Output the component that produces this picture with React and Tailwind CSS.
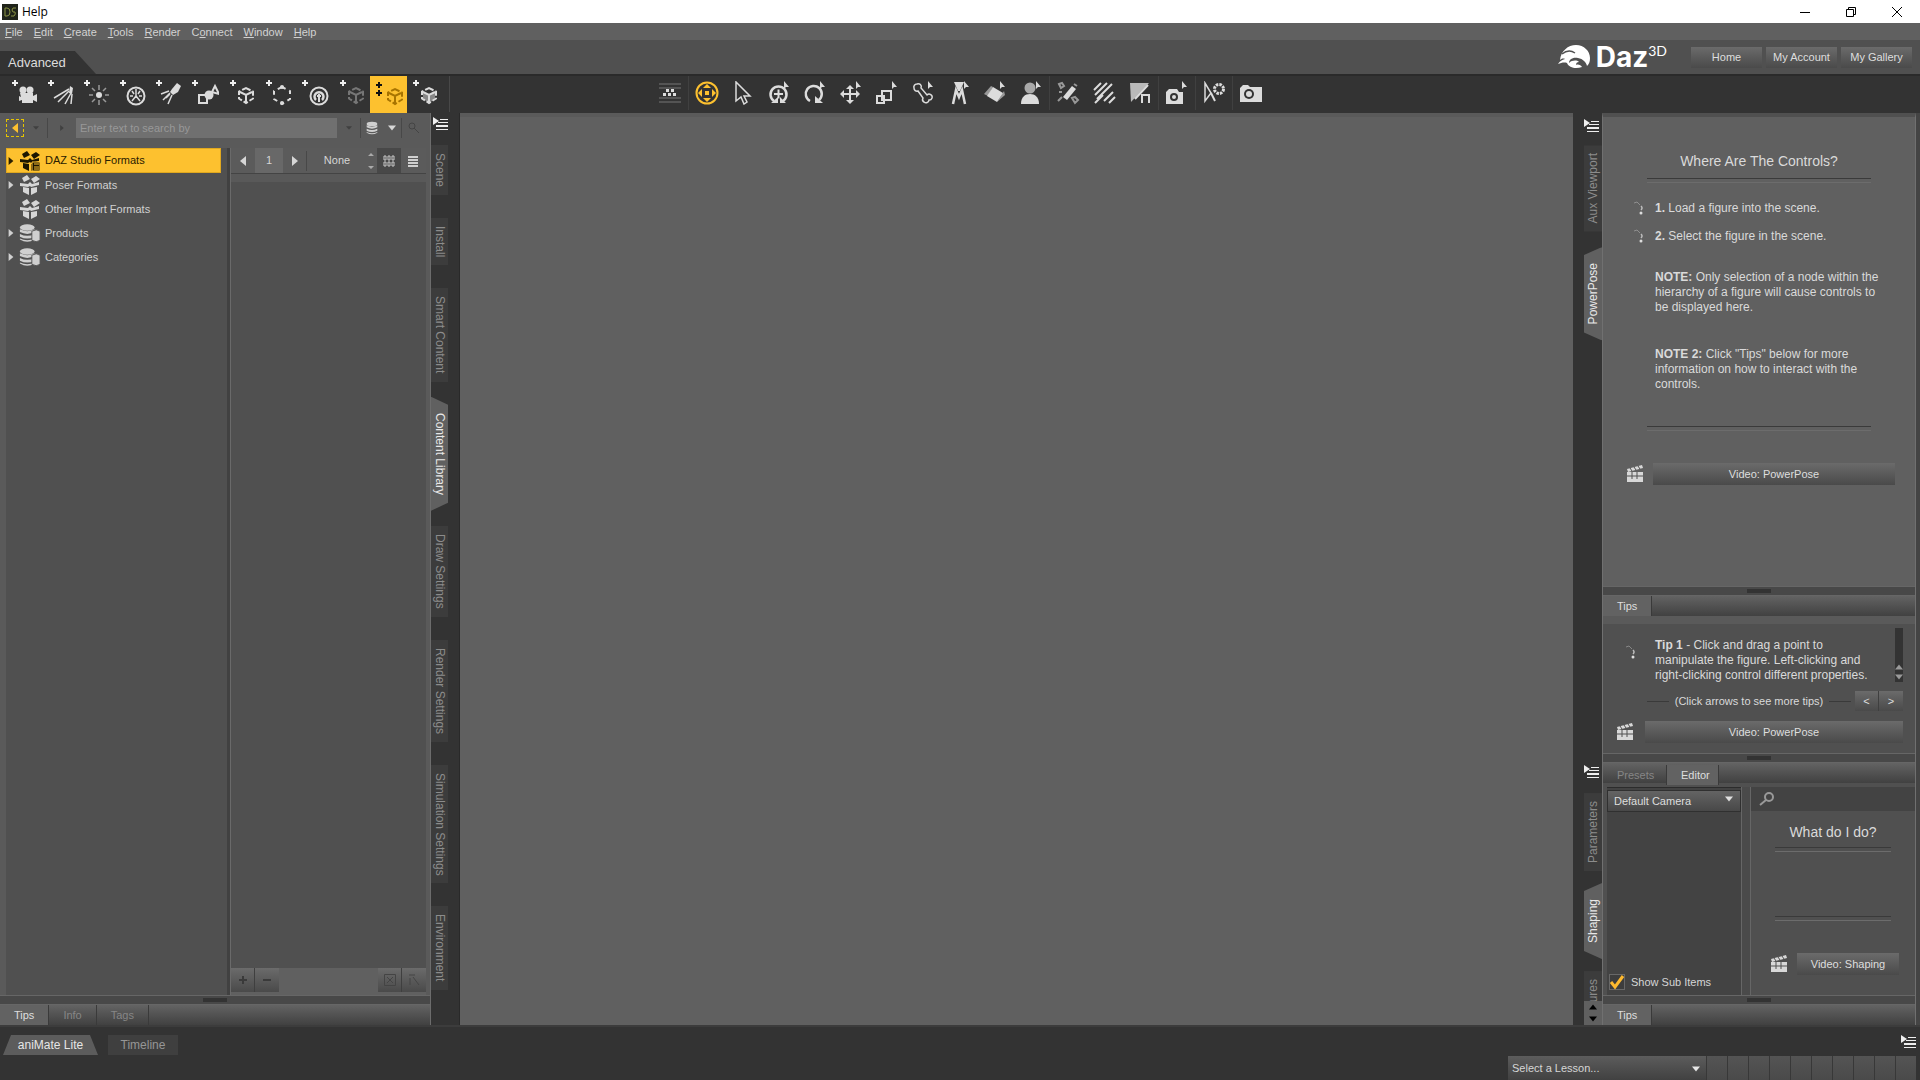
import { useState } from 'react';
import clsx from 'clsx';

// Toolbar glyphs, all drawn on a 24x24 grid
const Cube = () => (
  <g fill="none" stroke="currentColor" strokeWidth="2">
    <path d="M14 6l7 3.5v7L14 21l-7-4.500v-7z" strokeDasharray="5 2" />
    <path d="M8 10l6 3 6-3M14 13v7" />
  </g>
);

const Pointer = () => <path d="M17 0v8l2-2 3 0z" fill="currentColor" />;

const glyphs = {
  camera: <><circle cx="9" cy="8" r="3.500" /><circle cx="16" cy="8" r="3.500" /><path d="M6 11h13v3l4-2v8l-4-2v3H8v-3l-3 1v-5l2 1z" /></>,
  distant: <><path d="M20 4l3 2-1 6-3-1z" /><path d="M19 7L4 16M19 9L8 20M21 11l-6 11M22 12l-1 10" fill="none" stroke="currentColor" strokeWidth="1.500" /></>,
  point: <><circle cx="13" cy="13" r="3" /><path d="M13 3v5M13 18v5M3 13h4M19 13h4M6 6l3 3M17 17l3 3M20 6l-3 3M6 20l3-3" fill="none" stroke="currentColor" strokeWidth="1.500" opacity=".6" /></>,
  sun: <g fill="none" stroke="currentColor"><circle cx="14" cy="14" r="8.500" strokeWidth="2" /><path d="M14 7v7l-4 5M14 14l4 5M8 14h3M17 14h3M10 9l2 3M18 9l-2 3" strokeWidth="1.500" /></g>,
  spot: <><path d="M14 7l5-6 4 3-3 6-5 3-3-3z" /><path d="M11 9L3 12M12 11l-7 7M14 13l-4 9M12 12l-4 4" fill="none" stroke="currentColor" strokeWidth="1.500" /></>,
  shapes: <><circle cx="14" cy="13" r="4.500" /><path d="M4 13h8v8H4zM17 10l3-6 4 8z" fill="none" stroke="currentColor" strokeWidth="2" /></>,
  cube: <Cube />,
  dashed: <><path d="M14 5l8 4v8l-8 5-8-5V9z" fill="none" stroke="currentColor" strokeWidth="2" strokeDasharray="4 4" /><circle cx="14" cy="5" r="2" /><circle cx="14" cy="21" r="2" /></>,
  target: <g fill="none" stroke="currentColor"><circle cx="14" cy="14" r="8.500" strokeWidth="2" /><path d="M11 18a4.500 4.500 0 1 1 6 0" strokeWidth="2.500" /><path d="M14 12v8M12 14h4" strokeWidth="2" /></g>,
  faded: <g opacity=".4"><Cube /></g>,
  fill: <><Cube /><path d="M14 13l6-3v7l-6 4-6-4v-7z" opacity=".5" /></>,
};

const tools = {
  grid: <><path d="M1 3h22M1 7h22M1 17h22M1 21h22" stroke="currentColor" opacity=".4" /><path d="M8 8h3v3H8zM13 8h3v3h-3zM5 12h3v3H5zM10 12h3v3h-3zM15 12h3v3h-3z" /></>,
  orbit: <g className="text-[#fdc12f]"><circle cx="12" cy="12" r="10.500" fill="none" stroke="currentColor" strokeWidth="2" /><path fill="currentColor" d="M12 3l4 4H8zM12 21l4-4H8zM3 12l4-4v8zM21 12l-4-4v8zM10 10h4v4h-4z" /></g>,
  select: <path d="M5 1v19l5-4 3 7 3-2-3-6h6z" fill="#333" stroke="currentColor" strokeWidth="1.500" />,
  universal: <><path d="M7 20a8 8 0 1 1 9 0" fill="none" stroke="currentColor" strokeWidth="2.500" /><path d="M7 13h9M11.500 8.500v9" stroke="currentColor" strokeWidth="2" /><path d="M4 22h7v-6zM19 22h-6v-6z" /><Pointer /></>,
  rotate: <><path d="M7 20a8 8 0 1 1 9-1" fill="none" stroke="currentColor" strokeWidth="2.500" /><path d="M20 22h-8v-7z" /><Pointer /></>,
  move: <><path d="M11 4l4 4h-3v4h5V9l4 4-4 4v-3h-5v5h3l-4 4-4-4h3v-5H5v3l-4-4 4-4v3h5V8H7z" /><Pointer /></>,
  scale: <><path d="M7 10h9v9H7zM2 15h7v7H2z" fill="none" stroke="currentColor" strokeWidth="2" /><Pointer /></>,
  bone: <><path d="M3 7a3 3 0 0 1 3-4 3 3 0 0 1 4 4l6 7a3 3 0 0 1 5 3 3 3 0 0 1-3 2 3 3 0 0 1-5 2 3 3 0 0 1-1-4L7 10a3 3 0 0 1-4-3z" fill="none" stroke="currentColor" strokeWidth="1.500" /><Pointer /></>,
  joint: <><path d="M7 1h10l-4 9h-2z" /><path d="M6 23L9 9l3 7 3-7 3 14" fill="none" stroke="currentColor" strokeWidth="2.500" /><Pointer /></>,
  paint: <><path d="M10 6l10 6-6 9-10-6z" /><path d="M1 13l7-8 2 1-5 9zM14 21l8-7-1-4z" opacity=".6" /><Pointer /></>,
  figure: <><circle cx="11" cy="7" r="5.500" opacity=".7" /><path d="M2 23c0-7 4-10 9-10s9 3 9 10z" /><Pointer /></>,
  plus: <><path d="M7 16l9-11 4 3-9 11z" /><path d="M3 3l3-1 2 3-3 2zM16 17l3-1 3 3-3 3zM2 20l4-4M18 3l3 2M3 11h3" fill="none" stroke="currentColor" strokeWidth="2" opacity=".6" /></>,
  hatch: <path d="M2 9l7-7M3 14L15 2M5 18L20 3M3 22l8-8M12 20l9-9M17 22l6-6" fill="none" stroke="currentColor" strokeWidth="2" />,
  brush: <><path d="M2 2h19L3 21z" opacity=".8" /><path d="M20 4L8 18l4 0L22 7z" fill="#333" /><path d="M20 4L7 18M14 22v-8h7v8" fill="none" stroke="currentColor" strokeWidth="2" /></>,
  snap: <><path d="M1 11l3-3h8l2 3h4v12H1z" /><circle cx="9" cy="16" r="4" fill="#333" /><circle cx="9" cy="16" r="2" /><Pointer /></>,
  gear: <><path d="M3 2v18l6-8z" fill="none" stroke="currentColor" strokeWidth="1.500" /><circle cx="17" cy="8" r="4.500" fill="none" stroke="currentColor" strokeWidth="3" strokeDasharray="2.500 1" /><path d="M9 12l4 8" stroke="currentColor" strokeWidth="2" /></>,
  render: <><path d="M1 7l3-3h5l2 2h12v15H1z" /><circle cx="10" cy="13" r="5" fill="#333" /><circle cx="10" cy="13" r="3" /></>,
};

const groupEnds = ['grid', 'figure', 'brush', 'snap', 'gear'];

const Glyph = ({ children }) => (
  <svg viewBox="0 0 24 24" className="w-6 h-6" fill="currentColor">{children}</svg>
);

const MenuIcon = () => (
  <svg viewBox="0 0 15 14" className="w-[15px] h-[14px] shrink-0" fill="#eee">
    <path d="M0 0l6 4-6 4zM7 2h8v1H7zM5 5h10v1H5zM3 8h12v2H3zM3 12h12v1H3z" />
  </svg>
);

const Clapper = () => (
  <svg viewBox="0 0 20 20" className="w-5 h-5 shrink-0" fill="#d8d8d8">
    <path d="M2 8h16v10H2z" />
    <path d="M2 5l15-4 1 3L3 8z" />
    <path d="M5 4l2 3M9 3l2 3M13 2l2 3M2 12h16M7 8v7M12 8v7" stroke="#505050" fill="none" />
  </svg>
);

const Bullet = () => (
  <svg viewBox="0 0 14 16" className="w-3.5 h-4 shrink-0" fill="none" stroke="#bdbdbd">
    <path d="M3 3l3-1 3 3" opacity=".5" />
    <path d="M10 6q2 2 0 4" strokeWidth="1.500" />
    <circle cx="10" cy="13" r="1.500" fill="#ddd" stroke="none" />
  </svg>
);

const Box = ({ dark }) => (
  <svg viewBox="0 0 22 20" className="w-[22px] h-5 shrink-0" fill={dark ? '#1c1600' : '#d6d6d6'}>
    <path d="M3 3l5-3 3 4-6 3zM12 4l5-3 4 3-6 4zM1 8l8 1 2-2 2 2 7-2v3l-8 2-1-1-2 1-8-1zM4 12l6 1v7l-6-3zM12 13l6-1v5l-6 3z" />
    {dark && <path d="M13 11h8v9h-8zM15 13h5M15 16h5M15 18h5" stroke="#fdc12f" />}
  </svg>
);

const Database = ({ small }) => (
  <svg viewBox="0 0 24 20" className={small ? 'w-4 h-3.5 shrink-0' : 'w-[22px] h-5 shrink-0'} fill="#cfcfcf">
    <ellipse cx="9" cy="4" rx="8" ry="3.500" />
    <path d="M1 6q8 4 16 0v3q-8 4-16 0zM1 11q8 4 16 0v3q-8 4-16 0zM1 16q8 4 16 0v1q-8 5-16 0z" />
    {!small && <path d="M14 8q5-3 9 0v10q-4 3-9 0z" stroke="#505050" />}
  </svg>
);

const Arrow = ({ className }) => (
  <svg viewBox="0 0 10 10" className={clsx('h-2.5 shrink-0', className)} fill="currentColor">
    <path d="M0 2h10L5 8z" />
  </svg>
);

const RaisedButton = ({ className, children, ...rest }) => (
  <button
    className={clsx('bg-linear-to-b from-[#6b6b6b] to-[#4a4a4a] text-[11px] text-[#dedede] flex items-center justify-center whitespace-nowrap', className)}
    {...rest}
  >
    {children}
  </button>
);

// Vertical pane tabs. The right-hand strip reads upwards.
const SideTab = ({ label, active, flip }) => (
  <button
    className={clsx(
      'w-full flex items-center justify-center shrink-0',
      flip && 'rotate-180',
      active
        ? 'bg-[#606060] text-[#e8e8e8] py-4 -my-2 [clip-path:polygon(0_0,100%_8px,100%_calc(100%-8px),0_100%)]'
        : 'bg-[#3c3c3c] text-[#8c8c8c] py-2'
    )}
  >
    <span className="text-[12px] leading-[18px] whitespace-nowrap [writing-mode:vertical-rl]">{label}</span>
  </button>
);

const PaneTab = ({ label, active, className }) => (
  <button
    className={clsx(
      'h-full px-3.5 text-[11px] border-r border-[#3a3a3a]',
      active ? 'bg-[#626262] text-[#dedede]' : 'text-[#868686]',
      className
    )}
  >
    {label}
  </button>
);

const PaneTabBar = ({ children }) => (
  <div className="h-5 shrink-0 flex bg-linear-to-b from-[#636363] to-[#414141]">{children}</div>
);

const Splitter = () => (
  <div className="h-2.5 shrink-0 flex items-center justify-center border-y border-[#666] bg-[#484848]">
    <span className="w-6 h-1 bg-[#333]" />
  </div>
);

const Rule = ({ className }) => (
  <div className={clsx('border-t border-[#3a3a3a]', className)}>
    <div className="border-b border-[#6c6c6c] h-1" />
  </div>
);

const TitleBar = () => (
  <div className="h-[23px] shrink-0 bg-white flex items-center pl-0.5 text-black">
    <svg viewBox="0 0 16 16" className="w-4 h-4">
      <path d="M0 0h16v16H0z" fill="#20241a" />
      <path d="M3 4h2q3 0 3 4t-3 4H3zM14 4h-3q-2 2 0 4h2q1 2-1 4h-3" fill="none" stroke="#8b9444" />
    </svg>
    <span className="ml-1 text-[12px] font-['Open_Sans',sans-serif]">Help</span>
    <div className="ml-auto flex">
      <button aria-label="Minimize" className="w-[46px] h-5 flex items-center justify-center">
        <svg viewBox="0 0 10 10" className="w-2.5 h-2.5" stroke="#000"><path d="M0 5.500h10" /></svg>
      </button>
      <button aria-label="Restore" className="w-[46px] h-5 flex items-center justify-center">
        <svg viewBox="0 0 10 10" className="w-2.5 h-2.5" stroke="#000" fill="none"><path d="M.5 2.500h7v7h-7zM2.500 2.500v-2h7v7h-2" /></svg>
      </button>
      <button aria-label="Close" className="w-[46px] h-5 flex items-center justify-center">
        <svg viewBox="0 0 10 10" className="w-2.5 h-2.5" stroke="#000"><path d="M0 0l10 10M10 0L0 10" /></svg>
      </button>
    </div>
  </div>
);

const MenuBar = () => (
  <nav className="h-[17px] shrink-0 bg-[#606060] flex items-center gap-[11px] pl-[5px] pt-0.5 text-[11px] text-[#d2d2d2]">
    {['File', 'Edit', 'Create', 'Tools', 'Render', 'Connect', 'Window', 'Help'].map((item) => (
      <button key={item}>
        {item === 'Connect' ? <>C<u>o</u>nnect</> : <><u>{item[0]}</u>{item.slice(1)}</>}
      </button>
    ))}
  </nav>
);

const Brand = () => (
  <div className="h-[34px] shrink-0 bg-[#505050] flex items-end justify-between">
    <button className="w-24 h-[23px] pl-2 text-left text-[13px] text-[#dcdcdc] bg-[#333] [clip-path:polygon(0_0,78%_0,100%_100%,0_100%)]">
      Advanced
    </button>
    <div className="flex h-full items-center pr-2">
      <div className="flex h-full items-center text-white mr-6">
        <svg viewBox="0 0 32 24" className="w-8 h-6" fill="#fff">
          <path d="M0 19c2-3 4-4 7-5-2-1-4 0-5 1C3 6 10 0 18 0c8 0 14 6 14 13 0 4-1 6-3 8-1-4-4-7-9-8-6-1-9 2-9 5 3-3 8-3 10-1-2 0-3 1-3 3 2-1 5 0 6 2-6 2-13 1-15-4-3-1-6 0-9 1z" />
          <path d="M4 9c5-4 10-3 13-1" fill="none" stroke="#505050" strokeWidth="1.500" />
        </svg>
        <span className="ml-1.5 text-[28px] leading-[30px] font-bold font-['Inter',sans-serif]">Daz</span>
        <span className="self-start mt-1 text-[14px] leading-[14px] font-['Lato',sans-serif]">3D</span>
      </div>
      <div className="flex gap-1">
        {['Home', 'My Account', 'My Gallery'].map((item) => (
          <RaisedButton key={item} className="w-[71px] h-[21px]">{item}</RaisedButton>
        ))}
      </div>
    </div>
  </div>
);

const PlusMark = () => (
  <svg viewBox="0 0 6 6" className="absolute left-1.5 top-1 w-1.5 h-1.5" stroke="#eee" strokeWidth="2"><path d="M3 0v6M0 3h6" /></svg>
);

const Toolbar = () => (
  <div className="h-[39px] shrink-0 bg-[#333] border-t-2 border-[#2a2a2a] grid grid-cols-[1fr_auto_1fr] text-[#dcdcdc]">
    <div className="flex pl-1.5">
      {Object.keys(glyphs).slice(0, 10).map((name) => (
        <button
          key={name}
          aria-label={name}
          className={clsx('relative h-9 flex items-center justify-center pl-1', name === 'shapes' || name === 'target' ? 'w-[38px]' : 'w-9')}
        >
          <Glyph>{glyphs[name]}</Glyph>
          <PlusMark />
        </button>
      ))}
      <button aria-label="create active" className="relative w-[37px] h-[37px] flex items-center justify-center pl-2 bg-[#fdc12f] text-[#a87400]">
        <Glyph>{glyphs.cube}</Glyph>
        <svg viewBox="0 0 6 14" className="absolute left-1.5 top-1.5 w-1.5 h-3.5" stroke="#111" strokeWidth="2"><path d="M3 0v6M0 3h6M3 8v6M0 11h6" /></svg>
      </button>
      <button aria-label="fill" className="relative w-9 h-9 flex items-center justify-center pl-1">
        <Glyph>{glyphs.fill}</Glyph>
        <PlusMark />
      </button>
      <div className="ml-1.5 w-px h-9 bg-[#484848]" />
    </div>
    <div className="flex">
      {Object.entries(tools).map(([name, art]) => (
        <button
          key={name}
          aria-label={name}
          className={clsx('h-[34px] flex items-center justify-center', groupEnds.includes(name) ? 'w-[37px] border-r border-[#404040]' : 'w-9')}
        >
          <Glyph>{art}</Glyph>
        </button>
      ))}
    </div>
  </div>
);

const treeItems = [
  { label: 'DAZ Studio Formats', icon: <Box dark />, open: true },
  { label: 'Poser Formats', icon: <Box />, open: true },
  { label: 'Other Import Formats', icon: <Box /> },
  { label: 'Products', icon: <Database />, open: true },
  { label: 'Categories', icon: <Database />, open: true },
];

const ContentLibrary = () => {
  const [selected, setSelected] = useState(0);

  return (
    <section className="w-[431px] shrink-0 flex flex-col bg-[#5a5a5a] border-r border-[#6c6c6c]">
      <div className="h-7 shrink-0 flex items-center pl-1.5 pt-0.5 text-[#404040]">
        <button aria-label="Back" className="w-[18px] h-[18px] flex items-center justify-center border border-dashed border-[#e5c400] text-[#fdc12f]">
          <Arrow className="w-2.5 rotate-90" />
        </button>
        <button aria-label="Up" className="w-6 h-5 flex items-center justify-center border-r border-[#484848]"><Arrow className="w-1.5" /></button>
        <button aria-label="Forward" className="w-7 h-5 flex items-center justify-center"><Arrow className="w-1.5 -rotate-90" /></button>
        <input
          aria-label="Search"
          placeholder="Enter text to search by"
          className="w-[261px] h-5 pl-1 bg-[#707070] text-[11px] text-[#ddd] placeholder:text-[#989898] outline-none"
        />
        <button aria-label="History" className="w-6 h-5 flex items-center justify-center border-r border-[#484848]"><Arrow className="w-1.5" /></button>
        <button aria-label="Database" className="w-10 h-5 flex items-center justify-center gap-1.5 text-[#d6d6d6]"><Database small /><Arrow className="w-2" /></button>
        <button aria-label="Find" className="w-6 h-5 flex items-center justify-center border-l border-[#484848]">
          <svg viewBox="0 0 12 12" className="w-3 h-3" stroke="#444" fill="none"><circle cx="4" cy="4" r="3" /><path d="M6 6l5 5" /></svg>
        </button>
      </div>

      <div className="flex-1 min-h-0 flex pl-1.5 pr-1 pt-[7px]">
        {/* Folder tree */}
        <div className="w-[221px] pr-1.5 bg-[#505050] text-[11px] text-[#d0d0d0]">
          {treeItems.map((item, i) => (
            <button
              key={item.label}
              onClick={() => setSelected(i)}
              className={clsx(
                'w-full h-6 flex items-center first:h-[25px] border',
                i === selected ? 'bg-[#fdc12f] border-[#e0a81f] text-[#2b2000]' : 'border-transparent'
              )}
            >
              <Arrow className={clsx('-rotate-90 mr-1 w-2', !item.open && 'invisible')} />
              {item.icon}
              <span className="ml-1">{item.label}</span>
            </button>
          ))}
        </div>
        <div className="w-1 bg-[#414141] border-r border-[#6a6a6a]" />

        {/* Files of the chosen folder */}
        <div className="flex-1 flex flex-col bg-[#505050]">
          <div className="h-[26px] shrink-0 flex items-center bg-[#5b5b5b] border-b border-[#444] text-[11px] text-[#d6d6d6]">
            <button aria-label="Previous page" className="w-6 h-5 flex items-center justify-center"><Arrow className="w-2.5 rotate-90" /></button>
            <span className="w-7 h-full flex items-center justify-center bg-[#686868]">1</span>
            <button aria-label="Next page" className="w-6 h-5 flex items-center justify-center border-r border-[#484848]"><Arrow className="w-2.5 -rotate-90" /></button>
            <span className="w-[60px] text-center">None</span>
            <svg viewBox="0 0 8 16" className="w-2 h-4" fill="#aaa"><path d="M1 3l3-3 3 3zM1 13l3 3 3-3z" /></svg>
            <button aria-label="Grid view" className="ml-0.5 w-6 h-full flex items-center justify-center bg-[#484848]">
              <svg viewBox="0 0 12 12" className="w-3 h-3" fill="none" stroke="#c8c8c8"><path d="M1 1h2v4H1zM5 1h2v4H5zM9 1h2v4H9zM1 7h2v4H1zM5 7h2v4H5zM9 7h2v4H9z" /></svg>
            </button>
            <button aria-label="List view" className="w-6 h-full flex items-center justify-center">
              <svg viewBox="0 0 12 12" className="w-3 h-3" stroke="#d0d0d0" strokeWidth="2"><path d="M1 2h10M1 5h10M1 8h10M1 11h10" /></svg>
            </button>
          </div>
          <div className="h-2 bg-[#595959]" />
          <div className="flex-1" />
          <div className="h-[27px] shrink-0 flex items-start bg-[#606060]">
            <RaisedButton aria-label="Add" className="w-6 h-6 border-r border-[#3f3f3f]">
              <svg viewBox="0 0 8 8" className="w-2 h-2" stroke="#3a3a3a" strokeWidth="2"><path d="M4 0v8M0 4h8" /></svg>
            </RaisedButton>
            <RaisedButton aria-label="Remove" className="w-6 h-6">
              <svg viewBox="0 0 8 8" className="w-2 h-2" stroke="#3a3a3a" strokeWidth="2"><path d="M0 4h8" /></svg>
            </RaisedButton>
            <RaisedButton aria-label="Clear" className="ml-auto w-6 h-6 border-r border-[#3f3f3f]">
              <svg viewBox="0 0 12 12" className="w-3 h-3" stroke="#444" fill="none"><path d="M.5.5h11v11H.5zM3 3l6 6M9 3l-6 6" /></svg>
            </RaisedButton>
            <RaisedButton aria-label="Edit" className="w-6 h-6">
              <svg viewBox="0 0 12 12" className="w-3 h-3" stroke="#444" fill="none"><path d="M1 1h6M2 11V4M5 3l6 8" /></svg>
            </RaisedButton>
          </div>
        </div>
      </div>

      <Splitter />
      <PaneTabBar>
        <PaneTab label="Tips" active />
        <PaneTab label="Info" className="px-3" />
        <PaneTab label="Tags" className="px-3" />
      </PaneTabBar>
    </section>
  );
};

const LeftStrip = () => (
  <div className="w-[29px] shrink-0 pr-[11px] pt-1 bg-[#333] border-r border-[#292929] flex flex-col overflow-hidden">
    <div className="h-7 shrink-0 pl-0.5"><MenuIcon /></div>
    <div className="flex flex-col gap-[23px]">
      <SideTab label="Scene" />
      <SideTab label="Install" />
      <SideTab label="Smart Content" />
      <SideTab label="Content Library" active />
      <SideTab label="Draw Settings" />
      <SideTab label="Render Settings" />
      <SideTab label="Simulation Settings" />
      <SideTab label="Environment" />
    </div>
  </div>
);

const PowerPosePane = () => (
  <section className="flex-1 flex min-h-0">
    <div className="w-[29px] shrink-0 pl-[11px] pt-1.5 bg-[#333] flex flex-col">
      <div className="h-[26px] shrink-0"><MenuIcon /></div>
      <div className="flex flex-col gap-6">
        <SideTab label="Aux Viewport" flip />
        <SideTab label="PowerPose" active flip />
      </div>
    </div>
    <div className="flex-1 flex flex-col bg-[#606060] border-x border-[#707070] border-t-4 border-t-[#505050]">
      <div className="flex-1 text-[12px] leading-[15px] text-[#dadada]">
        <div className="px-11 pt-[35px]">
          <h2 className="text-[14px] leading-[18px] text-center">Where Are The Controls?</h2>
          <Rule className="mt-2" />
        </div>
        <ol className="mt-[11px] pl-7">
          <li className="flex items-center h-7"><Bullet /><span className="ml-2.5"><b>1.</b> Load a figure into the scene.</span></li>
          <li className="flex items-center h-7"><Bullet /><span className="ml-2.5"><b>2.</b> Select the figure in the scene.</span></li>
        </ol>
        <p className="mt-5 ml-[52px] w-[232px]">
          <b>NOTE:</b> Only selection of a node within the hierarchy of a figure will cause controls to be displayed here.
        </p>
        <p className="mt-8 ml-[52px] w-[222px]">
          <b>NOTE 2:</b> Click "Tips" below for more information on how to interact with the controls.
        </p>
        <Rule className="mt-[34px] mx-11" />
        <div className="mt-8 pl-[22px] pr-5 flex items-center gap-2">
          <Clapper />
          <RaisedButton className="flex-1 h-[22px]">Video: PowerPose</RaisedButton>
        </div>
      </div>
      <Splitter />
      <PaneTabBar><PaneTab label="Tips" active className="px-3" /></PaneTabBar>
      <div className="h-[137px] shrink-0 bg-[#505050] border-t-8 border-[#5a5a5a] text-[12px] leading-[15px] text-[#dadada] px-3 pt-3">
        <div className="flex pl-2">
          <span className="mt-2"><Bullet /></span>
          <p className="ml-[18px] mt-0.5 w-[222px]">
            <b>Tip 1</b> - Click and drag a point to manipulate the figure. Left-clicking and right-clicking control different properties.
          </p>
          <div className="-mt-2 ml-auto w-2 h-[54px] bg-[#333] flex flex-col justify-end items-center text-[#999]">
            <Arrow className="w-2 rotate-180" />
            <Arrow className="w-2" />
          </div>
        </div>
        <div className="mt-2 flex items-center pl-8 text-[11px]">
          <span className="flex-1 h-px bg-[#3a3a3a]" />
          <span className="mx-1.5 whitespace-nowrap">(Click arrows to see more tips)</span>
          <span className="flex-1 h-px bg-[#3a3a3a] mr-1" />
          <RaisedButton className="w-6 h-5 border-r border-[#3f3f3f]">&lt;</RaisedButton>
          <RaisedButton className="w-6 h-5">&gt;</RaisedButton>
        </div>
        <div className="mt-2.5 flex items-center gap-2.5">
          <Clapper />
          <RaisedButton className="flex-1 h-[22px]">Video: PowerPose</RaisedButton>
        </div>
      </div>
    </div>
  </section>
);

const ShapingPane = () => (
  <section className="h-[272px] shrink-0 flex">
    <div className="w-[29px] shrink-0 pl-[11px] pt-3 bg-[#333] flex flex-col overflow-hidden">
      <div className="h-7 shrink-0"><MenuIcon /></div>
      <div className="flex-1 min-h-0 overflow-hidden flex flex-col gap-5">
        <SideTab label="Parameters" flip />
        <SideTab label="Shaping" active flip />
        <SideTab label="Figures" flip />
      </div>
      <div className="h-6 shrink-0 bg-[#606060] flex flex-col items-center justify-around text-black">
        <button aria-label="Scroll up"><Arrow className="w-2 rotate-180" /></button>
        <button aria-label="Scroll down"><Arrow className="w-2" /></button>
      </div>
    </div>
    <div className="flex-1 min-w-0 flex flex-col bg-[#505050] border-x border-[#707070]">
      <Splitter />
      <PaneTabBar>
        <PaneTab label="Presets" className="w-16 mt-0.5" />
        <PaneTab label="Editor" active className="w-[52px] px-0 mt-0.5" />
      </PaneTabBar>
      <div className="flex-1 flex min-h-0 pl-1 pt-1">
        <div className="w-[134px] flex flex-col bg-[#434343] border-t border-[#2c2c2c]">
          <div className="relative">
            <select aria-label="Camera" className="w-full h-[22px] pl-1.5 appearance-none bg-linear-to-b from-[#646464] to-[#484848] border border-[#303030] text-[11px] text-[#dedede]">
              <option>Default Camera</option>
            </select>
            <Arrow className="absolute right-2 top-1.5 w-2 text-[#e0e0e0] pointer-events-none" />
          </div>
          <label className="mt-auto h-6 pb-0.5 pl-0.5 flex items-center gap-1.5 text-[11px] text-[#d6d6d6]">
            <span className="relative w-4 h-4">
              <input type="checkbox" defaultChecked className="peer block w-4 h-4 appearance-none bg-[#3d3d3d] border border-[#686868]" />
              <svg viewBox="0 0 16 16" className="absolute inset-0 w-4 h-4 pointer-events-none invisible peer-checked:visible" fill="none" stroke="#fdb92f" strokeWidth="3"><path d="M2 8l4 5 8-11" /></svg>
            </span>
            Show Sub Items
          </label>
        </div>
        <div className="w-2.5 border-x border-[#666] bg-[#4a4a4a]" />
        <div className="flex-1 min-w-0 text-[#dadada]">
          <div className="h-6 bg-[#434343] flex items-center pl-2">
            <svg viewBox="0 0 16 14" className="w-4 h-3.5 shrink-0" fill="none" stroke="#999" strokeWidth="2"><circle cx="10" cy="5" r="4" /><path d="M7 8l-6 5" /></svg>
            <input aria-label="Filter" className="flex-1 min-w-0 h-full pl-2 bg-transparent text-[11px] outline-none" />
          </div>
          <h2 className="mt-3 text-[14px] leading-[18px] text-center">What do I do?</h2>
          <Rule className="mt-1.5 mx-6" />
          <Rule className="mt-16 mx-6" />
          <div className="mt-8 pl-[18px] pr-4 flex items-center gap-2">
            <Clapper />
            <RaisedButton className="flex-1 h-[22px]">Video: Shaping</RaisedButton>
          </div>
        </div>
      </div>
      <Splitter />
      <PaneTabBar><PaneTab label="Tips" active className="px-3" /></PaneTabBar>
    </div>
  </section>
);

const BottomBar = () => (
  <footer className="h-[55px] shrink-0 bg-[#333] border-t-2 border-[#3c3c3c] flex justify-between text-[12px]">
    <div className="flex items-start pt-2">
      <button className="ml-[3px] w-[95px] h-5 bg-[#5c5c5c] text-[#e6e6e6] [clip-path:polygon(8px_0,calc(100%-8px)_0,100%_100%,0_100%)]">aniMate Lite</button>
      <button className="ml-2.5 w-[70px] h-5 bg-[#3f3f3f] text-[#969696]">Timeline</button>
    </div>
    <div className="flex flex-col items-end justify-between">
      <div className="pt-2 pr-1"><MenuIcon /></div>
      <div className="flex h-6 pr-1">
        <div className="relative">
          <select aria-label="Lesson" className="w-[198px] h-6 pl-1 appearance-none bg-linear-to-b from-[#5c5c5c] to-[#414141] text-[11px] text-[#d6d6d6]">
            <option>Select a Lesson...</option>
          </select>
          <Arrow className="absolute right-1.5 top-2 w-2 text-[#e6e6e6] pointer-events-none" />
        </div>
        {[1, 2, 3, 4, 5, 6, 7, 8, 9, 10].map((n) => (
          <RaisedButton key={n} aria-label={`Step ${n}`} className="w-[21px] h-6 border-l border-[#383838] from-[#545454] to-[#3e3e3e]" />
        ))}
      </div>
    </div>
  </footer>
);

const App = () => (
  <div className="h-screen flex flex-col overflow-hidden bg-[#333] font-['Liberation_Sans',Arial,sans-serif] leading-normal">
    <TitleBar />
    <MenuBar />
    <Brand />
    <Toolbar />
    <main className="flex-1 min-h-0 flex">
      <ContentLibrary />
      <LeftStrip />
      <div className="flex-1 bg-[#606060] border-t-4 border-[#5a5a5a]" />
      <aside className="w-[347px] shrink-0 flex flex-col border-r-4 border-[#444]">
        <PowerPosePane />
        <ShapingPane />
      </aside>
    </main>
    <BottomBar />
  </div>
);

export default App;
